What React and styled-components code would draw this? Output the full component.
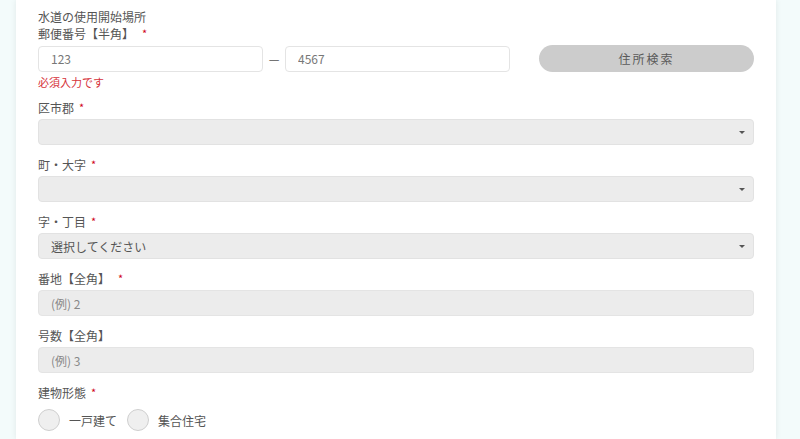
import React from "react";
import styled, { createGlobalStyle } from "styled-components";

const Global = createGlobalStyle`
  html, body { margin: 0; padding: 0; }
  body {
    background: #f3fbfb;
    font-family: "Noto Sans CJK JP", "Noto Sans", sans-serif;
    color: #555;
  }
`;

const Page = styled.div`
  height: 439px;
  overflow: hidden;
`;

const Card = styled.div`
  margin-left: 16px;
  width: 760px;
  min-height: 439px;
  box-sizing: border-box;
  background: #fff;
  box-shadow: 0 0 6px rgba(0, 0, 0, 0.08);
  padding: 8px 22px 0;
`;

const Title = styled.div`
  font-size: 12px;
  line-height: 17px;
  height: 17px;
`;

const Label = styled.div`
  font-size: 12px;
  line-height: 17px;
  height: 17px;
  margin-bottom: 3px;
  display: flex;
  align-items: center;
`;

const Req = styled.span`
  color: #d0021b;
  margin-left: ${(p) => p.$gap || 5}px;
  font-size: 11px;
  line-height: 17px;
`;

const Field = styled.div`
  margin-bottom: ${(p) => p.$mb ?? 11}px;
`;

const PostalRow = styled.div`
  display: grid;
  grid-template-columns: 225px 22px 225px 1fr;
  align-items: center;
  height: 26px;
`;

const TextBox = styled.input`
  display: block;
  box-sizing: border-box;
  width: 100%;
  height: 26px;
  margin: 0;
  border: 1px solid #e4e4e4;
  border-radius: 4px;
  background: ${(p) => (p.$filled ? "#ececec" : "#fff")};
  padding: 0 12px;
  font: inherit;
  font-size: 12px;
  color: #777;
  outline: none;
  &::placeholder {
    color: #888;
  }
`;

const Dash = styled.span`
  text-align: center;
  font-size: 12px;
  color: #555;
`;

const SearchButton = styled.button`
  margin-left: 29px;
  height: 27px;
  border: none;
  border-radius: 14px;
  background: #cccccc;
  color: #5a5a5a;
  font: inherit;
  font-size: 12px;
  letter-spacing: 2px;
`;

const ErrorText = styled.div`
  color: #d6323a;
  font-size: 11px;
  line-height: 16px;
  height: 16px;
  margin-top: 3px;
  margin-bottom: 9px;
`;

const SelectBox = styled.div`
  box-sizing: border-box;
  height: 26px;
  border: 1px solid #e2e2e2;
  border-radius: 4px;
  background: #ececec;
  display: flex;
  align-items: center;
  justify-content: space-between;
  padding: 0 8px 0 12px;
  font-size: 12px;
  color: #555;
`;

const Caret = styled.span`
  width: 0;
  height: 0;
  border-left: 3px solid transparent;
  border-right: 3px solid transparent;
  border-top: 3px solid #555;
`;

const RadioRow = styled.div`
  display: flex;
  align-items: center;
  gap: 10px;
  margin-top: 8px;
  height: 22px;
`;

const RadioItem = styled.label`
  display: flex;
  align-items: center;
  gap: 9px;
  font-size: 12px;
  color: #555;
`;

const Circle = styled.span`
  box-sizing: border-box;
  width: 22px;
  height: 22px;
  border-radius: 50%;
  border: 1px solid #cfcfcf;
  background: #efefef;
`;

const Select = ({ value }) => (
  <SelectBox>
    <span>{value}</span>
    <Caret />
  </SelectBox>
);

export default function App() {
  return (
    <Page>
      <Global />
      <Card>
        <Title>水道の使用開始場所</Title>
        <Label>
          郵便番号【半角】<Req $gap={8}>*</Req>
        </Label>
        <PostalRow>
          <TextBox defaultValue="123" />
          <Dash>—</Dash>
          <TextBox defaultValue="4567" />
          <SearchButton>住所検索</SearchButton>
        </PostalRow>
        <ErrorText>必須入力です</ErrorText>

        <Field>
          <Label>
            区市郡<Req>*</Req>
          </Label>
          <Select value="" />
        </Field>
        <Field>
          <Label>
            町・大字<Req>*</Req>
          </Label>
          <Select value="" />
        </Field>
        <Field>
          <Label>
            字・丁目<Req>*</Req>
          </Label>
          <Select value="選択してください" />
        </Field>
        <Field>
          <Label>
            番地【全角】<Req $gap={8}>*</Req>
          </Label>
          <TextBox $filled placeholder="(例) 2" />
        </Field>
        <Field>
          <Label>号数【全角】</Label>
          <TextBox $filled placeholder="(例) 3" />
        </Field>
        <Field>
          <Label>
            建物形態<Req>*</Req>
          </Label>
          <RadioRow>
            <RadioItem>
              <Circle />
              一戸建て
            </RadioItem>
            <RadioItem>
              <Circle />
              集合住宅
            </RadioItem>
          </RadioRow>
        </Field>
      </Card>
    </Page>
  );
}
